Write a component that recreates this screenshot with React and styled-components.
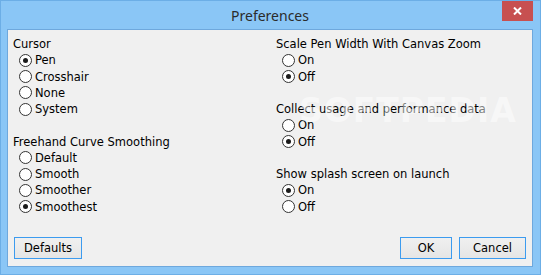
import React from "react";
import styled, { createGlobalStyle } from "styled-components";

const Global = createGlobalStyle`
  html, body { margin: 0; padding: 0; background: #8dc8f7; }
  * { box-sizing: border-box; }
`;

const Window = styled.div`
  position: relative;
  width: 541px;
  height: 275px;
  background: #8ac6f6;
  border: 1px solid #6caee6;
  display: flex;
  flex-direction: column;
  padding: 0 7px 7px 6px;
  overflow: hidden;
`;

const TitleBar = styled.div`
  height: 28px;
  display: grid;
  grid-template-columns: 1fr auto 1fr;
  align-items: start;
`;

const Title = styled.div`
  grid-column: 2;
  padding-top: 6px;
  font-family: "Noto Sans", "Open Sans", sans-serif;
  font-size: 14px;
  line-height: 18px;
  color: #2b2b2b;
`;

const CloseButton = styled.div`
  grid-column: 3;
  justify-self: end;
  margin-top: -1px;
  width: 31px;
  height: 21px;
  background: #c75050;
  display: flex;
  align-items: center;
  justify-content: center;
`;

const Client = styled.div`
  flex: 1;
  border: 1px solid #6ea8dd;
  background: #f0f0f0;
  display: flex;
  flex-direction: column;
  font-family: "DejaVu Sans", Verdana, sans-serif;
  font-size: 11.5px;
  color: #000;
`;

const Columns = styled.div`
  flex: 1;
  display: grid;
  grid-template-columns: 263px 1fr;
  padding: 6px 0 0 5px;
`;

const Column = styled.div`
  display: flex;
  flex-direction: column;
  gap: 16.25px;
`;

const Group = styled.div`
  display: flex;
  flex-direction: column;
`;

const Line = styled.div`
  height: 16.25px;
  line-height: 16px;
  white-space: nowrap;
`;

const RadioRow = styled.div`
  height: 16.25px;
  display: flex;
  align-items: center;
  padding-left: 6px;
  gap: 3px;
  white-space: nowrap;
  line-height: 16px;
`;

const RadioCircle = styled.span`
  width: 13px;
  height: 13px;
  border-radius: 50%;
  border: 1px solid #333;
  background: #fff;
  display: inline-flex;
  align-items: center;
  justify-content: center;
  flex: none;
  &::after {
    content: "";
    width: 5px;
    height: 5px;
    border-radius: 50%;
    background: ${(p) => (p.$checked ? "#1b1b1b" : "transparent")};
  }
`;

const Footer = styled.div`
  display: flex;
  align-items: center;
  padding: 0 6px 7px 6px;
  gap: 7px;
`;

const Spacer = styled.div`
  flex: 1;
`;

const Button = styled.div`
  width: ${(p) => p.$w}px;
  height: 22px;
  border: 1px solid #3c9bef;
  background: linear-gradient(#f0f0f0, #e5e5e5);
  display: flex;
  align-items: center;
  justify-content: center;
  font-family: "DejaVu Sans", Verdana, sans-serif;
  font-size: 11.5px;
  color: #000;
`;

const Watermark = styled.div`
  position: absolute;
  left: 298px;
  top: 90px;
  font-family: "DejaVu Sans", sans-serif;
  font-weight: bold;
  font-size: 33px;
  letter-spacing: 1px;
  color: rgba(255, 255, 255, 0.5);
  pointer-events: none;
`;

function Radio({ label, checked }) {
  return (
    <RadioRow>
      <RadioCircle $checked={checked} />
      <span>{label}</span>
    </RadioRow>
  );
}

function RadioGroup({ title, options, value }) {
  return (
    <Group>
      <Line>{title}</Line>
      {options.map((o) => (
        <Radio key={o} label={o} checked={o === value} />
      ))}
    </Group>
  );
}

export default function App() {
  return (
    <>
      <Global />
      <Window>
        <TitleBar>
          <Title>Preferences</Title>
          <CloseButton>
            <svg width="9" height="8" viewBox="0 0 9 8">
              <path d="M1 0.5 L8 7.5 M8 0.5 L1 7.5" stroke="#fff" strokeWidth="2" />
            </svg>
          </CloseButton>
        </TitleBar>
        <Client>
          <Columns>
            <Column>
              <RadioGroup title="Cursor" options={["Pen", "Crosshair", "None", "System"]} value="Pen" />
              <RadioGroup
                title="Freehand Curve Smoothing"
                options={["Default", "Smooth", "Smoother", "Smoothest"]}
                value="Smoothest"
              />
            </Column>
            <Column>
              <RadioGroup title="Scale Pen Width With Canvas Zoom" options={["On", "Off"]} value="Off" />
              <RadioGroup title="Collect usage and performance data" options={["On", "Off"]} value="Off" />
              <RadioGroup title="Show splash screen on launch" options={["On", "Off"]} value="On" />
            </Column>
          </Columns>
          <Footer>
            <Button $w={68}>Defaults</Button>
            <Spacer />
            <Button $w={52}>OK</Button>
            <Button $w={67}>Cancel</Button>
          </Footer>
        </Client>
        <Watermark>SOFTPEDIA</Watermark>
      </Window>
    </>
  );
}
